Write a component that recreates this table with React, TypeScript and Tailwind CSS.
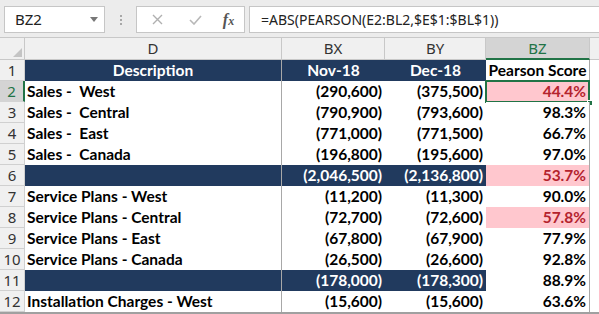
import React from "react";

type Row = {
  n: number;
  d: string;
  bx: string;
  by: string;
  bz: string;
  dark?: boolean;
  pink?: boolean;
  header?: boolean;
};

const rows: Row[] = [
  { n: 1, d: "Description", bx: "Nov-18", by: "Dec-18", bz: "Pearson Score", dark: true, header: true },
  { n: 2, d: "Sales -  West", bx: "(290,600)", by: "(375,500)", bz: "44.4%", pink: true },
  { n: 3, d: "Sales -  Central", bx: "(790,900)", by: "(793,600)", bz: "98.3%" },
  { n: 4, d: "Sales -  East", bx: "(771,000)", by: "(771,500)", bz: "66.7%" },
  { n: 5, d: "Sales -  Canada", bx: "(196,800)", by: "(195,600)", bz: "97.0%" },
  { n: 6, d: "", bx: "(2,046,500)", by: "(2,136,800)", bz: "53.7%", dark: true, pink: true },
  { n: 7, d: "Service Plans - West", bx: "(11,200)", by: "(11,300)", bz: "90.0%" },
  { n: 8, d: "Service Plans - Central", bx: "(72,700)", by: "(72,600)", bz: "57.8%", pink: true },
  { n: 9, d: "Service Plans - East", bx: "(67,800)", by: "(67,900)", bz: "77.9%" },
  { n: 10, d: "Service Plans - Canada", bx: "(26,500)", by: "(26,600)", bz: "92.8%" },
  { n: 11, d: "", bx: "(178,000)", by: "(178,300)", bz: "88.9%", dark: true },
  { n: 12, d: "Installation Charges - West", bx: "(15,600)", by: "(15,600)", bz: "63.6%" },
];

const cellFont = { fontFamily: "Lato, 'Open Sans', sans-serif" };
const uiFont = { fontFamily: "'Noto Sans', 'Open Sans', sans-serif" };

export default function App() {
  return (
    <div className="w-[599px] h-[314px] overflow-hidden bg-white" style={uiFont}>
      {/* Formula bar */}
      <div className="h-[38px] bg-[#ececec] flex items-start pt-[6px] pl-[4px] border-b border-[#c8c8c8]">
        <div className="w-[101px] h-[27px] bg-white border border-[#c6c6c6] flex items-center justify-between pl-[10px] pr-[6px]">
          <span className="text-[15px] text-[#222] leading-none">BZ2</span>
          <svg width="8" height="5" viewBox="0 0 8 5"><path d="M0 0 L8 0 L4 5 Z" fill="#777" /></svg>
        </div>
        <div className="w-[31px] h-[27px] flex items-center justify-center">
          <div className="flex flex-col gap-[2px]">
            <span className="w-[2px] h-[2px] bg-[#a8a8a8]" />
            <span className="w-[2px] h-[2px] bg-[#a8a8a8]" />
            <span className="w-[2px] h-[2px] bg-[#a8a8a8]" />
          </div>
        </div>
        <div className="w-[109px] h-[27px] bg-white border border-[#c6c6c6] flex items-center">
          <div className="w-[40px] flex justify-center">
            <svg width="11" height="11" viewBox="0 0 11 11"><path d="M1 1 L10 10 M10 1 L1 10" stroke="#b0b0b0" strokeWidth="1.4" /></svg>
          </div>
          <div className="w-[36px] flex justify-center">
            <svg width="13" height="10" viewBox="0 0 13 10"><path d="M1 5 L5 9 L12 1" stroke="#b8b8b8" strokeWidth="1.6" fill="none" /></svg>
          </div>
          <div className="w-[31px] flex justify-center">
            <span className="text-[16px] italic font-bold text-[#555] leading-none" style={{ fontFamily: "'Liberation Serif', serif" }}>
              f<span className="text-[12px]">x</span>
            </span>
          </div>
        </div>
        <div className="ml-[4px] flex-1 h-[27px] bg-white border border-[#c6c6c6] border-r-0 flex items-center pl-[11px]">
          <span className="text-[14px] text-[#222] leading-none">=ABS(PEARSON(E2:BL2,$E$1:$BL$1))</span>
        </div>
      </div>

      {/* Grid */}
      <div className="grid grid-cols-[25px_257px_103px_101px_104px_9px] grid-rows-[22px_repeat(12,21px)]">
        <div className="bg-[#f0f0f0] border-r border-b border-[#c8c8c8] relative">
          <svg className="absolute right-[2px] bottom-[2px]" width="9" height="9" viewBox="0 0 9 9"><path d="M9 0 L9 9 L0 9 Z" fill="#c4c4c4" /></svg>
        </div>
        <div className="bg-[#f0f0f0] border-r border-b border-[#c8c8c8] flex items-center justify-center text-[15px] text-[#333]">D</div>
        <div className="bg-[#f0f0f0] border-r border-b border-[#c8c8c8] flex items-center justify-center text-[15px] text-[#333]">BX</div>
        <div className="bg-[#f0f0f0] border-r border-b border-[#c8c8c8] flex items-center justify-center text-[15px] text-[#333]">BY</div>
        <div className="bg-[#d4d4d4] border-r border-[#c8c8c8] border-b-2 border-b-[#217346] flex items-center justify-center text-[15px] text-[#217346]">BZ</div>
        <div className="bg-[#f0f0f0] border-b border-[#c8c8c8]" />

        {rows.map((r) => {
          const sel = r.n === 2;
          const dataText = r.dark ? "text-white" : "text-black";
          return (
            <React.Fragment key={r.n}>
              <div
                className={
                  sel
                    ? "bg-[#d4d4d4] border-b border-[#d4d4d4] border-r-2 border-r-[#217346] flex items-center justify-center text-[15px] text-[#217346] leading-none"
                    : "bg-[#f0f0f0] border-b border-r border-[#d0d0d0] flex items-center justify-center text-[15px] text-[#333] leading-none"
                }
              >
                {r.n}
              </div>
              <div
                className={`${r.dark ? "bg-[#213a5e]" : "bg-white"} border-r border-[#a8a8a8] flex items-center ${r.header ? "justify-center" : "justify-start pl-[2px]"} text-[15.5px] font-bold ${dataText} leading-none whitespace-pre`}
                style={cellFont}
              >
                {r.d}
              </div>
              <div
                className={`${r.dark ? "bg-[#213a5e]" : "bg-white"} flex items-center ${r.header ? "justify-center" : "justify-end pr-[3px]"} text-[15.5px] font-bold ${dataText} leading-none`}
                style={cellFont}
              >
                {r.bx}
              </div>
              <div
                className={`${r.dark ? "bg-[#213a5e]" : "bg-white"} flex items-center ${r.header ? "justify-center" : "justify-end pr-[3px]"} text-[15.5px] font-bold ${dataText} leading-none`}
                style={cellFont}
              >
                {r.by}
              </div>
              <div
                className={`relative ${r.pink ? "bg-[#ffc7ce] text-[#b4232d]" : "bg-white text-black"} border-r border-[#a8a8a8] flex items-center ${r.header ? "justify-center" : "justify-end pr-[3px]"} text-[15.5px] font-bold leading-none`}
                style={cellFont}
              >
                {r.bz}
                {sel && (
                  <>
                    <div className="absolute left-[-1px] top-[-1px] right-[-1px] bottom-[-1px] border-2 border-[#217346] pointer-events-none" />
                    <div className="absolute right-[-4px] bottom-[-4px] w-[6px] h-[6px] bg-[#217346] border border-white" />
                  </>
                )}
              </div>
              <div className="bg-white" />
            </React.Fragment>
          );
        })}
      </div>
      <div className="h-[2px] bg-[#a0a0a0]" />
    </div>
  );
}
